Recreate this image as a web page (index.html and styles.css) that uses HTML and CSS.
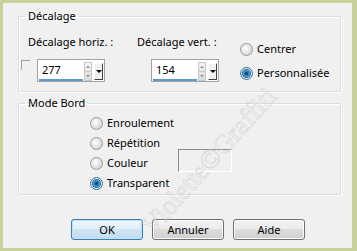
FILE: index.html
```
<!DOCTYPE html>
<html lang="fr">
<head>
  <meta charset="UTF-8">
  <title>Décalage</title>
  <link rel="stylesheet" href="styles.css">
</head>
<body>
  <div class="dialog">
    <fieldset class="group shift">
      <legend>Décalage</legend>
      <div class="shift-body">
        <div class="shift-col horiz">
          <div class="field-label">Décalage horiz. :</div>
          <div class="field-line">
            <span class="check"></span>
            <div class="spin">
              <span class="spin-value">277</span>
              <span class="spin-arrows"><i class="up"></i><i class="down"></i></span>
              <span class="spin-drop"><i></i></span>
            </div>
          </div>
        </div>
        <div class="shift-col vert">
          <div class="field-label">Décalage vert. :</div>
          <div class="field-line">
            <div class="spin">
              <span class="spin-value">154</span>
              <span class="spin-arrows"><i class="up"></i><i class="down"></i></span>
              <span class="spin-drop"><i></i></span>
            </div>
          </div>
        </div>
        <div class="radio-list anchor">
          <div class="radio-row"><span class="radio"></span>Centrer</div>
          <div class="radio-row"><span class="radio on"></span>Personnalisée</div>
        </div>
      </div>
    </fieldset>

    <fieldset class="group edge">
      <legend>Mode Bord</legend>
      <div class="edge-body">
        <div class="radio-list modes">
          <div class="radio-row"><span class="radio"></span>Enroulement</div>
          <div class="radio-row"><span class="radio"></span>Répétition</div>
          <div class="radio-row"><span class="radio"></span>Couleur</div>
          <div class="radio-row"><span class="radio on"></span>Transparent</div>
        </div>
        <div class="swatch"></div>
      </div>
    </fieldset>

    <div class="buttons">
      <button class="btn default">OK</button>
      <button class="btn">Annuler</button>
      <button class="btn">Aide</button>
    </div>

    <div class="watermark">Violette©Graffiti</div>
  </div>
</body>
</html>
```

FILE: styles.css
```
body {
  margin: 0;
  background: #c6d29a;
  font-family: "Noto Sans", sans-serif;
  font-size: 11px;
  color: #000;
}
.dialog {
  position: relative;
  width: 349px;
  height: 245px;
  margin: 3px 5px 3px 3px;
  background: #f0f0f0;
  padding: 5px 0 0 15px;
  box-sizing: border-box;
  overflow: hidden;
}
.group {
  margin: 0;
  padding: 0;
  width: 323px;
  box-sizing: border-box;
  border: 1px solid #d5dfe5;
  box-shadow: 1px 1px 0 #fff, inset 1px 1px 0 #fff;
}
.group legend {
  margin-left: 6px;
  padding: 0 3px;
  line-height: 16px;
}
.shift {
  height: 84px;
}
.edge {
  height: 100px;
  margin-top: 3px;
}
.shift-body {
  display: flex;
  padding-top: 10px;
}
.field-label {
  line-height: 16px;
}
.horiz {
  width: 118px;
}
.horiz .field-label {
  padding-left: 9px;
}
.vert {
  width: 103px;
}
.field-line {
  display: flex;
  align-items: flex-start;
  margin-top: 9px;
}
.check {
  width: 9px;
  height: 10px;
  margin: 1px 0 0 2px;
  border-top: 1px solid #a0a0a0;
  border-left: 1px solid #a0a0a0;
  box-sizing: border-box;
}
.horiz .spin {
  margin-left: 7px;
}
.vert .spin {
  margin-left: 14px;
}
.spin {
  display: flex;
  width: 68px;
  height: 23px;
  box-sizing: border-box;
  border: 1px solid #a3a3a3;
  background: #fff;
  padding: 2px 1px 1px 1px;
}
.spin-value {
  width: 46px;
  padding-left: 3px;
  line-height: 16px;
  box-sizing: border-box;
  border-bottom: 2px solid #5d9bcf;
  height: 19px;
}
.spin-arrows {
  display: flex;
  flex-direction: column;
  width: 7px;
  height: 17px;
  margin-left: 1px;
  border: 1px solid #c8c8c8;
  background: linear-gradient(#f4f4f4, #dcdcdc);
}
.spin-arrows i {
  flex: 1;
  display: flex;
  align-items: center;
  justify-content: center;
}
.spin-arrows i::before {
  content: "";
  border-left: 2px solid transparent;
  border-right: 2px solid transparent;
}
.spin-arrows .up::before {
  border-bottom: 2px solid #8a8a8a;
}
.spin-arrows .down::before {
  border-top: 2px solid #8a8a8a;
}
.spin-arrows .down {
  border-top: 1px solid #c8c8c8;
}
.spin-drop {
  display: flex;
  align-items: center;
  justify-content: center;
  width: 9px;
  height: 17px;
  margin: 1px 0 0 2px;
  background: #f0f0f0;
  border-top: 1px solid #fff;
  border-left: 1px solid #fff;
  border-right: 1px solid #404040;
  border-bottom: 1px solid #404040;
  box-sizing: border-box;
}
.spin-drop i {
  border-left: 3px solid transparent;
  border-right: 3px solid transparent;
  border-top: 3px solid #000;
}
.anchor {
  padding-top: 7px;
}
.anchor .radio-row + .radio-row {
  margin-top: 8px;
}
.radio-row {
  display: flex;
  align-items: center;
  line-height: 16px;
  white-space: nowrap;
}
.radio {
  flex-shrink: 0;
  width: 13px;
  height: 13px;
  box-sizing: border-box;
  border: 1px solid #9a9a9a;
  border-radius: 50%;
  background: radial-gradient(circle at 40% 40%, #ffffff, #e6e6e6 45%, #c6c6c6 100%);
  margin-right: 4px;
}
.radio.on {
  border-color: #3c6e92;
  background: radial-gradient(circle, #0b3557 0, #1c5f8e 1.5px, #4ea3d6 3px, #2a76ad 4.2px, #e4eef5 4.8px, #d2d9de 100%);
}
.edge-body {
  display: flex;
  padding-top: 2px;
}
.modes {
  flex-shrink: 0;
  width: 88px;
  margin-left: 71px;
}
.modes .radio-row {
  height: 20px;
}
.swatch {
  width: 54px;
  height: 23px;
  margin-top: 36px;
  box-sizing: border-box;
  border-top: 1px solid #8c8c8c;
  border-left: 1px solid #8c8c8c;
  border-right: 1px solid #fff;
  border-bottom: 1px solid #fff;
}
.buttons {
  display: flex;
  gap: 9px;
  margin: 24px 0 0 53px;
}
.btn {
  width: 72px;
  height: 21px;
  padding: 0;
  font: inherit;
  color: #000;
  border: 1px solid #707070;
  border-radius: 3px;
  background: linear-gradient(#f2f2f2 0, #ebebeb 50%, #dddddd 50%, #cfcfcf 100%);
  box-shadow: inset 0 0 0 1px #fcfcfc;
}
.btn.default {
  border-color: #3c7fb1;
  background: linear-gradient(#eef6fb 0, #e0eef8 50%, #cfe5f4 50%, #c1dcef 100%);
  box-shadow: inset 0 0 0 1px #bfe2f8;
}
.watermark {
  position: absolute;
  left: 206px;
  top: 158px;
  font-family: "Liberation Serif", serif;
  font-size: 27px;
  color: transparent;
  -webkit-text-stroke: 0.5px #d2d2d2;
  transform: translate(-50%, -50%) rotate(-48deg);
  white-space: nowrap;
  pointer-events: none;
}
```
